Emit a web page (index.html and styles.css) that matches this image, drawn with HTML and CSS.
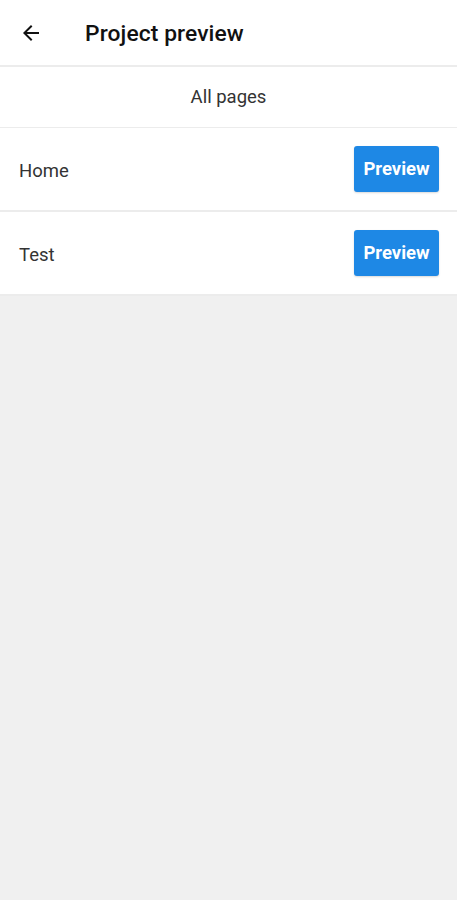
FILE: index.html
```html
<!DOCTYPE html>
<html lang="en">
<head>
    <meta charset="UTF-8">
    <meta name="viewport" content="width=device-width, initial-scale=1.0">
    <title>Project preview</title>
    <link rel="stylesheet" href="styles.css">
</head>
<body>
    <header class="app-bar">
        <button class="back-btn" aria-label="Back">
            <svg width="24" height="24" viewBox="0 0 24 24">
                <path d="M20 11H7.83l5.59-5.59L12 4l-8 8 8 8 1.41-1.41L7.83 13H20v-2z" fill="#111"/>
            </svg>
        </button>
        <h1 class="app-title">Project preview</h1>
    </header>

    <div class="section-title">All pages</div>

    <ul class="page-list">
        <li class="page-row">
            <span class="page-name">Home</span>
            <button class="preview-btn">Preview</button>
        </li>
        <li class="page-row">
            <span class="page-name">Test</span>
            <button class="preview-btn">Preview</button>
        </li>
    </ul>
</body>
</html>
```

FILE: styles.css
```css
body {
    margin: 0;
    font-family: Roboto, 'Noto Sans', sans-serif;
    background-color: #f0f0f0;
    color: #222;
    min-height: 900px;
}
.app-bar {
    display: flex;
    align-items: center;
    height: 65px;
    background-color: #fff;
    border-bottom: 2px solid #ececec;
}
.back-btn {
    display: flex;
    align-items: center;
    justify-content: center;
    width: 24px;
    height: 24px;
    margin-left: 19px;
    padding: 0;
    border: none;
    background: none;
}
.app-title {
    margin: 2px 0 0 42px;
    font-size: 22.8px;
    font-weight: 500;
    color: #111;
    letter-spacing: 0.1px;
}
.section-title {
    height: 60px;
    line-height: 60px;
    text-align: center;
    font-size: 18.5px;
    color: #333;
    background-color: #fff;
    border-bottom: 1px solid #ececec;
}
.page-list {
    list-style: none;
    margin: 0;
    padding: 0;
}
.page-row {
    display: flex;
    align-items: center;
    justify-content: space-between;
    height: 82px;
    padding: 0 18px 0 19px;
    background-color: #fff;
    border-bottom: 2px solid #ececec;
}
.page-name {
    padding-top: 3px;
    font-size: 18.5px;
    color: #333;
}
.preview-btn {
    width: 85px;
    height: 46px;
    padding: 0;
    border: none;
    border-radius: 3px;
    background-color: #1e88e5;
    color: #fff;
    font-family: Roboto, 'Noto Sans', sans-serif;
    font-size: 18.5px;
    font-weight: 700;
    box-shadow: 0 1px 2px rgba(0, 0, 0, 0.15);
}
```
